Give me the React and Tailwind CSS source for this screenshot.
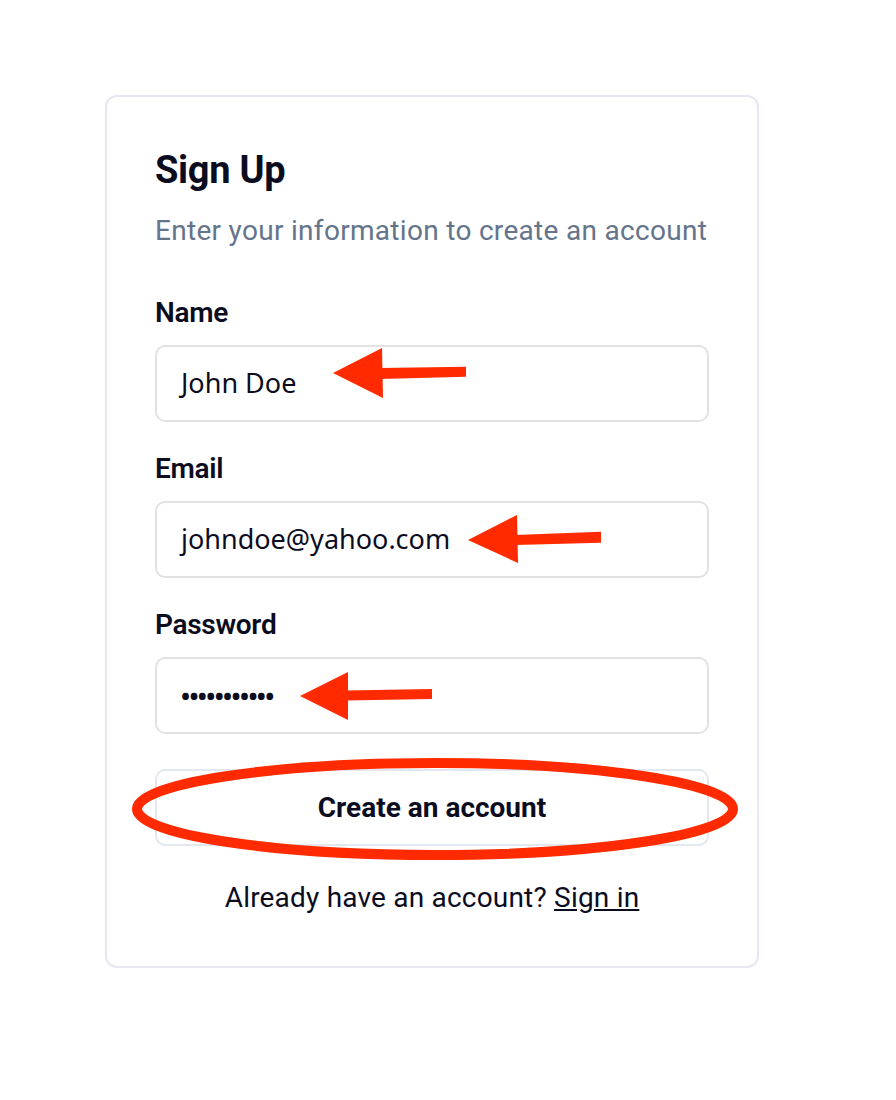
import React from "react";

function Field({ label, value, type = "text" }) {
  return (
    <div className="flex flex-col gap-[12px]">
      <label className="text-[28px] leading-[40px] font-semibold text-[#0b0d1f] tracking-[-0.3px]">{label}</label>
      <div className="h-[77px] rounded-[10px] border-2 border-[#e2e2e2] bg-white flex items-center pl-[24px]">
        <span
          className={
            type === "password"
              ? "text-[24px] font-bold tracking-[-0.6px] text-[#0b0d1f] font-['Noto_Sans',sans-serif]"
              : "text-[27px] text-[#0b0d1f] font-['Noto_Sans',sans-serif]"
          }
        >
          {value}
        </span>
      </div>
    </div>
  );
}

export default function App() {
  return (
    <div className="relative w-[896px] h-[1100px] bg-white font-['Roboto',sans-serif]">
      <div className="ml-[105px] mt-[95px] inline-block w-[654px] rounded-[12px] border-2 border-[#e6e7f0] bg-white px-[48px] pt-[49px] pb-[48px]">
        <h1 className="text-[38px] leading-[48px] font-bold text-[#0b0d1f] tracking-[-0.3px]">Sign Up</h1>
        <p className="mt-[17px] whitespace-nowrap text-[28px] leading-[40px] text-[#64748b] tracking-[0.3px]">Enter your information to create an account</p>
        <div className="mt-[42px] flex flex-col gap-[27px]">
          <Field label="Name" value="John Doe" />
          <Field label="Email" value="johndoe@yahoo.com" />
          <Field label="Password" value="•••••••••••" type="password" />
        </div>
        <button className="mt-[35px] w-full h-[77px] rounded-[10px] border-2 border-[#e3e7ef] bg-white text-[28px] font-bold text-[#0b0d1f]">
          Create an account
        </button>
        <p className="mt-[32px] whitespace-nowrap text-center text-[28px] leading-[40px] text-[#0b0d1f] tracking-[0.2px]">
          Already have an account? <a className="underline">Sign in</a>
        </p>
      </div>
      <svg className="absolute inset-0 pointer-events-none" width="896" height="1100" viewBox="0 0 896 1100">
        <g fill="#ff2a00" stroke="none">
          <polygon points="333,373 382,348 383,398" />
          <polygon points="380,368 466,366.7 466,376.7 380,379" />
          <polygon points="468,540 517,515 518,563" />
          <polygon points="515,535 601,531.7 601,542.7 515,545" />
          <polygon points="300,696 348,672 348,720" />
          <polygon points="345,690.5 432,689 432,699 345,700.5" />
        </g>
        <ellipse cx="435" cy="809" rx="298" ry="46" fill="none" stroke="#ff2a00" strokeWidth="10" />
      </svg>
    </div>
  );
}
